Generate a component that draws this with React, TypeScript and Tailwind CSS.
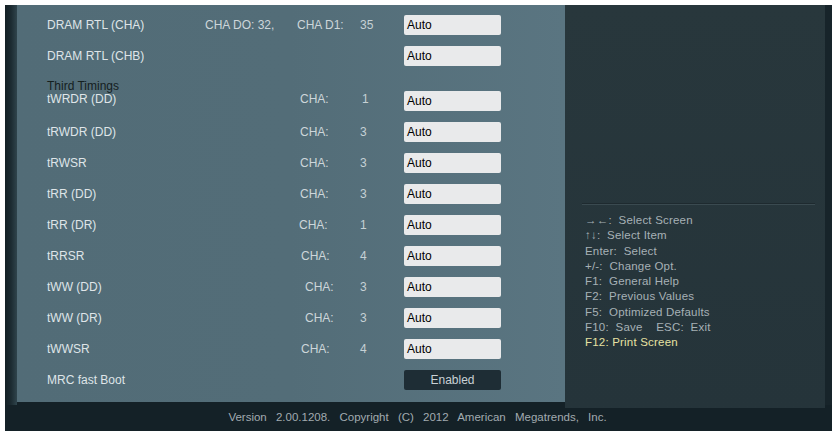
import type { ReactNode } from 'react'

interface TimingRow {
  label: string
  cha: string
  value: string
  chaClass?: string
}

const timings: TimingRow[] = [
  { label: 'tRWDR (DD)', cha: 'CHA:', value: '3' },
  { label: 'tRWSR', cha: 'CHA:', value: '3' },
  { label: 'tRR (DD)', cha: 'CHA:', value: '3' },
  { label: 'tRR (DR)', cha: 'CHA:', value: '1', chaClass: '-ml-[1px]' },
  { label: 'tRRSR', cha: 'CHA:', value: '4', chaClass: 'ml-[1px]' },
  { label: 'tWW (DD)', cha: 'CHA:', value: '3', chaClass: 'ml-[5px]' },
  { label: 'tWW (DR)', cha: 'CHA:', value: '3', chaClass: 'ml-[5px]' },
  { label: 'tWWSR', cha: 'CHA:', value: '4', chaClass: 'ml-[1px]' },
]

const help: string[] = [
  '→←:  Select Screen',
  '↑↓:  Select Item',
  'Enter:  Select',
  '+/-:  Change Opt.',
  'F1:  General Help',
  'F2:  Previous Values',
  'F5:  Optimized Defaults',
  'F10:  Save    ESC:  Exit',
]

function AutoBox({ text = 'Auto' }: { text?: string }) {
  return (
    <div className="w-[97px] h-[20px] rounded-[2px] bg-[#e9eaeb] pl-[3px] flex items-center text-[12px] text-black">
      {text}
    </div>
  )
}

function Row({
  label,
  mid,
  value,
  box,
}: {
  label: ReactNode
  mid?: ReactNode
  value?: string
  box: ReactNode
}) {
  return (
    <div className="h-[31px] flex items-center">
      <div className="w-[253px] text-[#dfe5e8] whitespace-pre">{label}</div>
      <div className="w-[60px] text-[#cdd6da] whitespace-pre">{mid}</div>
      <div className="w-[44px] text-[#c6d1d5]">{value}</div>
      {box}
    </div>
  )
}

export default function App() {
  return (
    <div
      className="w-[832px] h-[431px] bg-white pt-[5px] pl-[5px] flex flex-col overflow-hidden"
      style={{ fontFamily: '"Liberation Sans", Arial, sans-serif' }}
    >
      <div className="flex-1 bg-[#142127] flex flex-col">
        <div className="h-[400px] flex">
          {/* left shadow bar */}
          <div className="w-[12px] h-full bg-gradient-to-r from-[#131f24] via-[#1c2b31] to-[#2f444c]" />

          {/* settings panel */}
          <div className="w-[548px] h-[397px] bg-gradient-to-r from-[#526c77] via-[#536d78] to-[#5a7581] pl-[30px] pt-[4px] text-[12px]">
            <Row
              label={
                <div className="flex">
                  <span className="w-[158px]">DRAM RTL (CHA)</span>
                  <span className="text-[#cdd6da]">CHA DO: 32,</span>
                </div>
              }
              mid={<span className="-ml-[3px]">CHA D1:</span>}
              value="35"
              box={<AutoBox />}
            />
            <Row label="DRAM RTL (CHB)" box={<AutoBox />} />

            <div className="h-[45px] flex items-end">
              <div className="w-[253px] flex flex-col leading-[13px] mb-[10px]">
                <span className="text-[#15201f]">Third Timings</span>
                <span className="text-[#dfe5e8]">tWRDR (DD)</span>
              </div>
              <div className="w-[60px] text-[#cdd6da] mb-[10px] leading-[13px]">CHA:</div>
              <div className="w-[44px] text-[#c6d1d5] mb-[10px] leading-[13px] pl-[2px]">1</div>
              <div className="mb-[5px]">
                <AutoBox />
              </div>
            </div>

            {timings.map((t) => (
              <Row
                key={t.label}
                label={t.label}
                mid={<span className={t.chaClass ?? ''}>{t.cha}</span>}
                value={t.value}
                box={<AutoBox />}
              />
            ))}

            <Row
              label="MRC fast Boot"
              box={
                <div className="w-[97px] h-[20px] rounded-[2px] bg-[#1e2d35] flex items-center justify-center text-[12px] text-[#c9d1d5]">
                  Enabled
                </div>
              }
            />
          </div>

          {/* help panel */}
          <div className="w-[260px] h-[403px] bg-gradient-to-b from-[#28373c] to-[#25343a] flex flex-col">
            <div className="h-[198px]" />
            <div className="mx-[17px] w-[233px] h-[2px] bg-[#1e2a2f] border-b border-[#3a4a50]" />
            <div className="pl-[20px] pt-[8px] text-[11.5px] leading-[15.3px] text-[#a6b1b6] tracking-[0.2px]">
              {help.map((h) => (
                <div key={h} className="whitespace-pre">
                  {h}
                </div>
              ))}
              <div className="text-[#e6e2a2]">F12: Print Screen</div>
            </div>
          </div>

          <div className="w-[7px] h-full bg-[#17242a]" />
        </div>

        <div className="flex-1 flex items-center justify-center pr-[2px] text-[11.5px] text-[#a2abb0] [word-spacing:6px]">
          Version 2.00.1208. Copyright (C) 2012 American Megatrends, Inc.
        </div>
      </div>
    </div>
  )
}
